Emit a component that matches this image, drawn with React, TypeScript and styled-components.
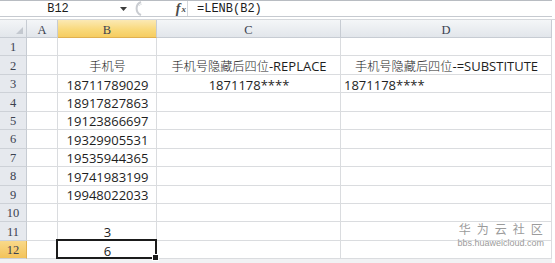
import styled, { createGlobalStyle, css } from 'styled-components';

const GlobalStyle = createGlobalStyle`
    html, body {
        margin: 0;
        padding: 0;
        background: #ffffff;
        overflow: hidden;
    }
`;

type Align = 'center' | 'left';

interface CellData {
    text?: string;
    align?: Align;
}

const phones = [
    '18711789029',
    '18917827863',
    '19123866697',
    '19329905531',
    '19535944365',
    '19741983199',
    '19948022033',
];

const columns = ['A', 'B', 'C', 'D'];
const selectedCol = 'B';
const selectedRow = 12;

// rows[i] = cells of row i+1, in column order A..D
const rows: CellData[][] = [
    [{}, {}, {}, {}],
    [
        {},
        { text: '手机号', align: 'center' },
        { text: '手机号隐藏后四位-REPLACE', align: 'center' },
        { text: '手机号隐藏后四位-=SUBSTITUTE', align: 'center' },
    ],
    [
        {},
        { text: phones[0], align: 'center' },
        { text: '1871178****', align: 'center' },
        { text: '1871178****', align: 'left' },
    ],
    ...phones.slice(1).map((p) => [{}, { text: p, align: 'center' as Align }, {}, {}]),
    [{}, {}, {}, {}],
    [{}, { text: '3', align: 'center' }, {}, {}],
    [{}, { text: '6', align: 'center' }, {}, {}],
];

// split CJK runs so they can use a slightly smaller size than latin text
function renderText(text: string) {
    const parts = text.split(/([\u4e00-\u9fff]+)/).filter(Boolean);
    return parts.map((part, i) =>
        /[\u4e00-\u9fff]/.test(part) ? <Cjk key={i}>{part}</Cjk> : <span key={i}>{part}</span>
    );
}

export default function App() {
    return (
        <Sheet>
            <GlobalStyle />
            <FormulaBar>
                <NameBox>B12</NameBox>
                <NameCaret>
                    <svg width="7" height="4" viewBox="0 0 7 4">
                        <path d="M0 0 L7 0 L3.5 4 Z" fill="#3c3c3c" />
                    </svg>
                </NameCaret>
                <Splitter>
                    <svg width="12" height="15" viewBox="0 0 12 15">
                        <path d="M10 1 A7 7 0 0 0 10 14" fill="none" stroke="#c9ccd1" strokeWidth="2" />
                        <path d="M11 3 A5 5 0 0 0 8 5" fill="none" stroke="#e1e3e6" strokeWidth="1" />
                    </svg>
                </Splitter>
                <FxButton>
                    <i>f</i>
                    <sub>x</sub>
                </FxButton>
                <FormulaInput>=LENB(B2)</FormulaInput>
            </FormulaBar>
            <Grid>
                <Corner>
                    <svg width="7" height="7" viewBox="0 0 7 7">
                        <path d="M7 0 L7 7 L0 7 Z" fill="#c3c8cf" />
                    </svg>
                </Corner>
                {columns.map((c) => (
                    <ColHeader key={c} $selected={c === selectedCol}>
                        {c}
                    </ColHeader>
                ))}
                <Filler />
                {rows.map((cells, r) => (
                    <Row key={r}>
                        <RowHeader $selected={r + 1 === selectedRow}>{r + 1}</RowHeader>
                        {cells.map((cell, c) => (
                            <Cell
                                key={c}
                                $align={cell.align ?? 'left'}
                                $selected={r + 1 === selectedRow && columns[c] === selectedCol}
                            >
                                {cell.text ? renderText(cell.text) : null}
                            </Cell>
                        ))}
                        <Filler />
                    </Row>
                ))}
            </Grid>
            <BottomStrip />
            <Watermark>
                <WatermarkTitle>华为云社区</WatermarkTitle>
                <WatermarkUrl>bbs.huaweicloud.com</WatermarkUrl>
            </Watermark>
        </Sheet>
    );
}

const Sheet = styled.div`
    position: relative;
    width: 555px;
    height: 263px;
    background: #ffffff;
    overflow: hidden;
`;

const FormulaBar = styled.div`
    display: flex;
    align-items: stretch;
    width: 552px;
    height: 17px;
    box-sizing: border-box;
    border-top: 1px solid #b8bcc2;
    border-bottom: 1px solid #c6cad0;
    background: #ffffff;
    font-family: 'Liberation Mono', 'DejaVu Sans Mono', monospace;
    font-size: 12px;
    color: #1c1c1c;
`;

const NameBox = styled.div`
    width: 116px;
    display: flex;
    align-items: center;
    justify-content: center;
    padding-top: 1px;
`;

const NameCaret = styled.div`
    width: 14px;
    display: flex;
    align-items: center;
    justify-content: center;
    padding-top: 1px;
`;

const Splitter = styled.div`
    width: 14px;
    display: flex;
    align-items: center;
    justify-content: center;
`;

const FxButton = styled.div`
    flex: 1;
    display: flex;
    align-items: center;
    justify-content: flex-end;
    padding-right: 1px;
    border-right: 1px solid #d4d7db;
    font-family: 'Liberation Serif', serif;
    font-size: 14px;
    font-weight: bold;
    color: #4a4a4a;

    i {
        font-style: italic;
    }

    sub {
        font-size: 9px;
        font-style: italic;
        vertical-align: -1px;
        margin-left: 1px;
    }
`;

const FormulaInput = styled.div`
    width: 355px;
    display: flex;
    align-items: center;
    padding-left: 9px;
    padding-top: 1px;
`;

const Grid = styled.div`
    display: grid;
    grid-template-columns: 27px 31px 99px 184px 211px 1fr;
    grid-template-rows: 18px repeat(12, 18.45px);
    width: 555px;
    margin-top: 2px;
    border-top: 1px solid #d5d8dc;
    box-sizing: border-box;
`;

const Row = styled.div`
    display: contents;
`;

const headerBase = css`
    display: flex;
    align-items: center;
    justify-content: center;
    box-sizing: border-box;
    font-family: 'Liberation Serif', 'DejaVu Serif', serif;
    font-size: 12.5px;
    color: #3b4250;
`;

const Corner = styled.div`
    ${headerBase};
    align-items: flex-end;
    justify-content: flex-end;
    padding: 0 3px 3px 0;
    background: linear-gradient(#f3f5f7, #e2e6eb);
    border-right: 1px solid #c7ccd3;
    border-bottom: 1px solid #c7ccd3;
`;

const ColHeader = styled.div<{ $selected: boolean }>`
    ${headerBase};
    padding-top: 3px;
    border-right: 1px solid #c7ccd3;
    border-bottom: 1px solid ${(p) => (p.$selected ? '#e0b050' : '#c7ccd3')};
    background: ${(p) =>
        p.$selected
            ? 'linear-gradient(#fbe9b4, #f9d97c 55%, #f6cd61)'
            : 'linear-gradient(#f4f6f8, #e2e6eb)'};
`;

const RowHeader = styled.div<{ $selected: boolean }>`
    ${headerBase};
    padding-top: 2px;
    border-right: 1px solid ${(p) => (p.$selected ? '#e0b050' : '#c7ccd3')};
    border-bottom: 1px solid #cdd1d7;
    background: ${(p) => (p.$selected ? 'linear-gradient(#f9d98a, #f3c35a)' : '#e6e9ee')};
`;

const Filler = styled.div`
    background: #ffffff;
`;

const Cell = styled.div<{ $align: Align; $selected: boolean }>`
    position: relative;
    display: flex;
    align-items: center;
    justify-content: ${(p) => (p.$align === 'center' ? 'center' : 'flex-start')};
    padding: 2px 2px 0 3px;
    box-sizing: border-box;
    border-right: 1px solid #dadcdf;
    border-bottom: 1px solid #dadcdf;
    font-family: 'Open Sans', 'Noto Sans CJK SC', sans-serif;
    font-size: 13px;
    color: #1e1e1e;
    white-space: nowrap;

    ${(p) =>
        p.$selected &&
        css`
            &::after {
                content: '';
                position: absolute;
                top: -2px;
                left: -2px;
                right: -1px;
                bottom: -1px;
                border: 2px solid #1b1b1b;
            }
            &::before {
                content: '';
                position: absolute;
                right: -3px;
                bottom: -3px;
                width: 5px;
                height: 5px;
                background: #1b1b1b;
                border: 1px solid #ffffff;
                z-index: 1;
            }
        `}
`;

const Cjk = styled.span`
    font-family: 'Noto Sans CJK SC', sans-serif;
    font-size: 12.2px;
    font-weight: 300;
`;

const BottomStrip = styled.div`
    height: 4px;
    width: 552px;
    background: #f1f2f4;
`;

const Watermark = styled.div`
    position: absolute;
    right: 11px;
    top: 221px;
    display: flex;
    flex-direction: column;
    align-items: center;
    color: #9b9b9b;
`;

const WatermarkTitle = styled.div`
    font-family: 'Noto Sans CJK SC', sans-serif;
    font-size: 12px;
    line-height: 16px;
    letter-spacing: 6px;
    margin-right: -6px;
`;

const WatermarkUrl = styled.div`
    font-family: 'Liberation Sans', sans-serif;
    font-size: 9px;
    line-height: 12px;
`;
